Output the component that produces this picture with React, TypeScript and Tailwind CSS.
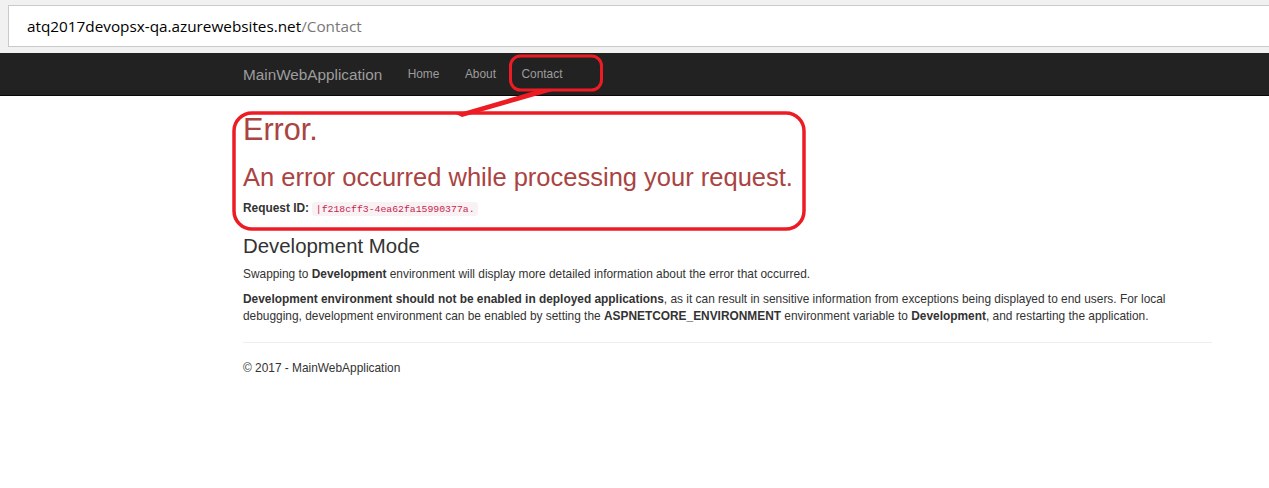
const App = () => {
  return (
    <div className="relative min-h-[488px] bg-white font-['Liberation_Sans',Arial,sans-serif] text-[11.9px] leading-[17px] text-[#333]">
      {/* browser address bar */}
      <div className="h-[53px] bg-[#f1f1f1] pt-[5px] pl-[8px]">
        <div className="flex h-[42px] items-center border border-r-0 border-[#cacaca] bg-white pl-[18px] font-['Open_Sans',sans-serif] text-[15.3px]">
          <span className="text-black">atq2017devopsx-qa.azurewebsites.net</span>
          <span className="text-[#777]">/Contact</span>
        </div>
      </div>

      {/* navbar */}
      <nav className="h-[42.5px] border-b border-[#080808] bg-[#222]">
        <div className="ml-[243px] flex h-full items-center pt-[1px] text-[#9d9d9d]">
          <a className="pr-[12.75px] text-[15.3px]">MainWebApplication</a>
          <ul className="flex">
            <li className="px-[12.75px]">Home</li>
            <li className="px-[12.75px]">About</li>
            <li className="px-[12.75px]">Contact</li>
          </ul>
        </div>
      </nav>

      {/* body content */}
      <div className="ml-[243px] w-[969px] pt-[17px]">
        <h1 className="mb-[17px] text-[30.6px] leading-[1.1] text-[#a94442]">Error.</h1>
        <h2 className="mb-[8.5px] text-[25.5px] leading-[1.1] text-[#a94442]">
          An error occurred while processing your request.
        </h2>
        <p className="mb-[17px]">
          <strong>Request ID:</strong>{" "}
          <code className="rounded-[3.4px] bg-[#f9f2f4] px-[3.4px] py-[1.7px] font-['Liberation_Mono',monospace] text-[9.8px] text-[#c7254e]">
            |f218cff3-4ea62fa15990377a.
          </code>
        </p>

        <h3 className="mb-[8.5px] text-[20.4px] leading-[1.1]">Development Mode</h3>
        <p className="mb-[8.5px]">
          Swapping to <strong>Development</strong> environment will display more detailed information
          about the error that occurred.
        </p>
        <p>
          <strong>Development environment should not be enabled in deployed applications</strong>, as it
          can result in sensitive information from exceptions being displayed to end users. For local
          debugging, development environment can be enabled by setting the{" "}
          <strong>ASPNETCORE_ENVIRONMENT</strong> environment variable to <strong>Development</strong>,
          and restarting the application.
        </p>

        <hr className="mt-[17px] mb-[17px] border-t border-[#eee]" />
        <footer>
          <p>© 2017 - MainWebApplication</p>
        </footer>
      </div>

      {/* red annotation drawn over the page */}
      <svg className="pointer-events-none absolute top-0 left-0" width="1269" height="488">
        <rect x="510.5" y="56" width="91" height="34" rx="10" fill="none" stroke="#ed1c24" strokeWidth="3" />
        <polygon points="538,90 556,90 462,117 456,114" fill="#ed1c24" />
        <rect x="234" y="113" width="570" height="116" rx="18" fill="none" stroke="#ed1c24" strokeWidth="3.5" />
      </svg>
    </div>
  );
};

export default App;
